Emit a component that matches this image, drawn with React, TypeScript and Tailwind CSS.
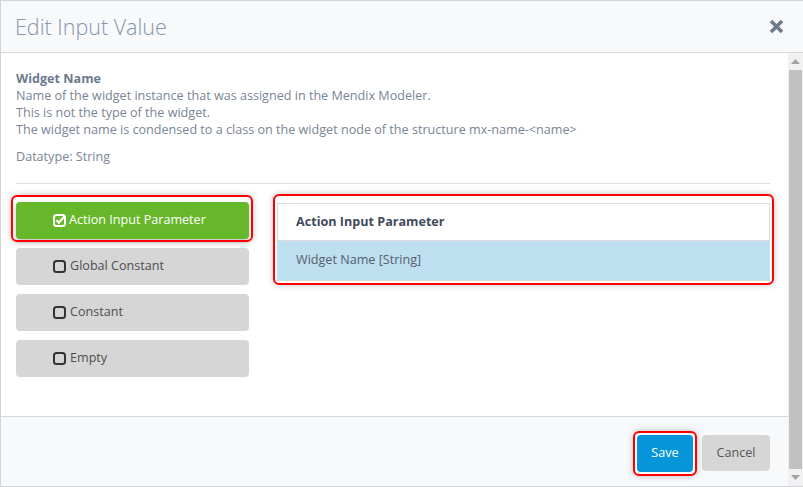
import React from "react";

const Square = ({ checked }: { checked?: boolean }) => (
  <svg width="13" height="13" viewBox="0 0 13 13" className="shrink-0">
    <rect x="1" y="1" width="11" height="11" rx="2.5" fill="none" stroke={checked ? "#fff" : "#333"} strokeWidth="2" />
    {checked && <path d="M3.5 6.3 L5.8 8.6 L11.5 2.5" fill="none" stroke="#fff" strokeWidth="2.2" />}
  </svg>
);

const Mark = ({ className }: { className: string }) => (
  <span className={"pointer-events-none absolute rounded-[6px] border-2 border-[#ff0000] shadow-[0_0_6px_rgba(0,0,0,0.25)] " + className} />
);

const options = ["Global Constant", "Constant", "Empty"];

export default function App() {
  return (
    <div className="w-[803px] h-[487px] flex flex-col border border-r-0 border-[#d2d5d9] bg-white font-['Open_Sans',sans-serif] text-[12.6px] overflow-hidden">
      <div className="h-[52px] shrink-0 flex items-center justify-between pl-[14px] pr-[19px] bg-[#f8f9fb] border-b border-[#d6d9dc]">
        <h1 className="text-[21.5px] font-light text-[#8696ab] leading-none">Edit Input Value</h1>
        <svg width="15" height="15" viewBox="0 0 15 15">
          <path d="M2 2 L13 13 M13 2 L2 13" stroke="#6f7b88" strokeWidth="3.6" />
        </svg>
      </div>

      <div className="flex-1 flex min-h-0">
        <div className="flex-1 flex flex-col">
          <div className="flex-1 pl-[15px] pr-[18px] pt-[17px]">
            <div className="leading-[17px] text-[#7a8595]">
              <p className="font-bold text-[#6d7a8b]">Widget Name</p>
              <p>Name of the widget instance that was assigned in the Mendix Modeler.</p>
              <p>This is not the type of the widget.</p>
              <p>The widget name is condensed to a class on the widget node of the structure mx-name-&lt;name&gt;</p>
              <p className="mt-[10px]">Datatype: String</p>
            </div>
            <hr className="mt-[18px] border-t border-[#dadde0]" />

            <div className="mt-[18px] flex gap-[28px]">
              <div className="w-[233px] flex flex-col gap-[9px]">
                <div className="relative">
                  <Mark className="-top-[7px] -left-[5px] -right-[4px] -bottom-[3px]" />
                  <button className="w-full h-[37px] rounded-[4px] bg-[#66b82a] text-white flex items-center gap-[3px] pl-[37px] shadow-[0_2px_4px_rgba(0,0,0,0.25)]">
                    <Square checked />
                    Action Input Parameter
                  </button>
                </div>
                {options.map((o) => (
                  <button key={o} className="w-full h-[37px] rounded-[4px] bg-[#d6d6d6] text-[#4e4e4e] flex items-center gap-[4px] pl-[37px]">
                    <Square />
                    {o}
                  </button>
                ))}
              </div>

              <div className="relative flex-1 self-start mt-[1px]">
                <Mark className="-top-[9px] -left-[4px] -right-[4px] -bottom-[4px]" />
                <div className="border border-[#d9d9d9] shadow-[inset_0_1px_3px_rgba(0,0,0,0.12)]">
                  <div className="h-[37px] flex items-center pl-[18px] font-bold text-[#3f4b5b] border-b border-[#dcdcdc] bg-white">
                    Action Input Parameter
                  </div>
                  <div className="h-[39px] flex items-center pl-[18px] bg-[#bddff0] text-[#56606c]">Widget Name [String]</div>
                </div>
              </div>
            </div>
          </div>

          <div className="h-[70px] shrink-0 flex justify-end items-start gap-[9px] pt-[18px] pr-[18px] bg-[#f8f9fb] border-t border-[#d6d9dc]">
            <div className="relative">
              <Mark className="-top-[4px] -left-[4px] -right-[4px] -bottom-[4px]" />
              <button className="h-[37px] w-[56px] rounded-[4px] bg-[#0595d8] text-white">Save</button>
            </div>
            <button className="h-[36px] w-[68px] rounded-[4px] bg-[#d6d6d6] text-[#555]">Cancel</button>
          </div>
        </div>

        <div className="w-[15px] shrink-0 flex flex-col items-center bg-[#f1f1f1]">
          <div className="h-[17px] flex items-center justify-center">
            <svg width="9" height="5" viewBox="0 0 9 5"><path d="M0 5 L4.5 0 L9 5 Z" fill="#a3a3a3" /></svg>
          </div>
          <div className="flex-1 w-[13px] bg-[#c1c1c1]" />
          <div className="h-[17px] flex items-center justify-center">
            <svg width="9" height="5" viewBox="0 0 9 5"><path d="M0 0 L4.5 5 L9 0 Z" fill="#a3a3a3" /></svg>
          </div>
        </div>
      </div>
    </div>
  );
}
